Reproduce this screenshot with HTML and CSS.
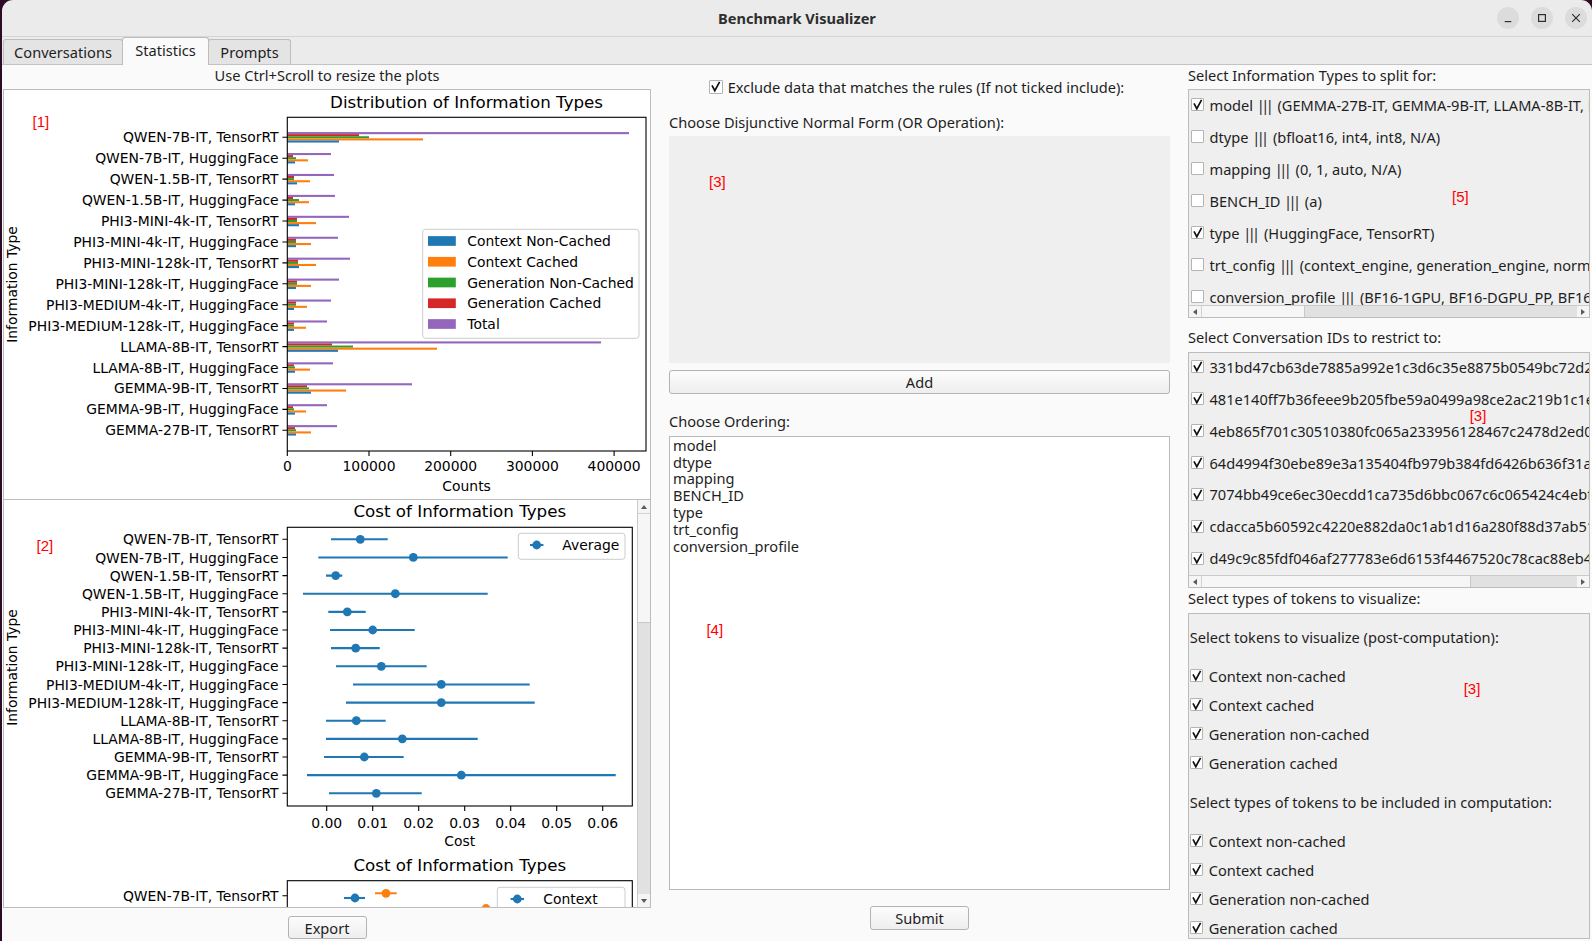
FILE: index.html
```html
<!DOCTYPE html>
<html>
<head>
<meta charset="utf-8">
<title>Benchmark Visualizer</title>
<link rel="stylesheet" href="styles.css">
</head>
<body>
<div class="window">
  <header class="titlebar">
    <div></div>
    <div class="title">Benchmark Visualizer</div>
    <div class="wbtns">
      <span class="wbtn"><svg viewBox="0 0 22 22"><path d="M7.7 14.6h6.6"/></svg></span>
      <span class="wbtn"><svg viewBox="0 0 22 22"><rect x="7.6" y="7.6" width="6.8" height="6.8"/></svg></span>
      <span class="wbtn"><svg viewBox="0 0 22 22"><path d="M7.2 7.2l7.6 7.6M14.8 7.2l-7.6 7.6"/></svg></span>
    </div>
  </header>
  <nav class="tabbar">
    <div class="tab t1">Conversations</div>
    <div class="tab t2 active">Statistics</div>
    <div class="tab t3">Prompts</div>
  </nav>
  <main class="pane">
    <section class="col-left">
      <div class="hint">Use Ctrl+Scroll to resize the plots</div>
      <div class="frame frame1">
        <svg class="mpl" width="646" height="409" viewBox="4 90 646 409">
          <rect x="4" y="90" width="646" height="409" fill="#fff"/>
          <text class="ttl m" x="466.6" y="107.5">Distribution of Information Types</text>
          <g transform="translate(287.3 137.3)"><rect class="b4" y="-5.23" width="341.7" height="2.09"/><rect class="b3" y="-3.14" width="71.7" height="2.09"/><rect class="b2" y="-1.05" width="81.7" height="2.09"/><rect class="b1" y="1.05" width="135.7" height="2.09"/><rect class="b0" y="3.14" width="51.7" height="2.09"/></g>
          <g transform="translate(287.3 158.23)"><rect class="b4" y="-5.23" width="43.7" height="2.09"/><rect class="b3" y="-3.14" width="5.7" height="2.09"/><rect class="b2" y="-1.05" width="8.7" height="2.09"/><rect class="b1" y="1.05" width="20.7" height="2.09"/><rect class="b0" y="3.14" width="7.7" height="2.09"/></g>
          <g transform="translate(287.3 179.16)"><rect class="b4" y="-5.23" width="46.7" height="2.09"/><rect class="b3" y="-3.14" width="6.7" height="2.09"/><rect class="b2" y="-1.05" width="6.7" height="2.09"/><rect class="b1" y="1.05" width="22.7" height="2.09"/><rect class="b0" y="3.14" width="9.7" height="2.09"/></g>
          <g transform="translate(287.3 200.09)"><rect class="b4" y="-5.23" width="47.7" height="2.09"/><rect class="b3" y="-3.14" width="5.7" height="2.09"/><rect class="b2" y="-1.05" width="11.7" height="2.09"/><rect class="b1" y="1.05" width="21.7" height="2.09"/><rect class="b0" y="3.14" width="7.7" height="2.09"/></g>
          <g transform="translate(287.3 221.02)"><rect class="b4" y="-5.23" width="61.7" height="2.09"/><rect class="b3" y="-3.14" width="9.7" height="2.09"/><rect class="b2" y="-1.05" width="9.7" height="2.09"/><rect class="b1" y="1.05" width="28.7" height="2.09"/><rect class="b0" y="3.14" width="11.7" height="2.09"/></g>
          <g transform="translate(287.3 241.95)"><rect class="b4" y="-5.23" width="50.7" height="2.09"/><rect class="b3" y="-3.14" width="8.7" height="2.09"/><rect class="b2" y="-1.05" width="8.7" height="2.09"/><rect class="b1" y="1.05" width="23.7" height="2.09"/><rect class="b0" y="3.14" width="8.7" height="2.09"/></g>
          <g transform="translate(287.3 262.88)"><rect class="b4" y="-5.23" width="62.7" height="2.09"/><rect class="b3" y="-3.14" width="10.7" height="2.09"/><rect class="b2" y="-1.05" width="10.7" height="2.09"/><rect class="b1" y="1.05" width="28.7" height="2.09"/><rect class="b0" y="3.14" width="11.7" height="2.09"/></g>
          <g transform="translate(287.3 283.81)"><rect class="b4" y="-5.23" width="51.7" height="2.09"/><rect class="b3" y="-3.14" width="9.7" height="2.09"/><rect class="b2" y="-1.05" width="9.7" height="2.09"/><rect class="b1" y="1.05" width="23.7" height="2.09"/><rect class="b0" y="3.14" width="8.7" height="2.09"/></g>
          <g transform="translate(287.3 304.74)"><rect class="b4" y="-5.23" width="43.7" height="2.09"/><rect class="b3" y="-3.14" width="8.7" height="2.09"/><rect class="b2" y="-1.05" width="8.7" height="2.09"/><rect class="b1" y="1.05" width="19.7" height="2.09"/><rect class="b0" y="3.14" width="6.7" height="2.09"/></g>
          <g transform="translate(287.3 325.67)"><rect class="b4" y="-5.23" width="39.7" height="2.09"/><rect class="b3" y="-3.14" width="6.7" height="2.09"/><rect class="b2" y="-1.05" width="6.7" height="2.09"/><rect class="b1" y="1.05" width="18.7" height="2.09"/><rect class="b0" y="3.14" width="6.7" height="2.09"/></g>
          <g transform="translate(287.3 346.6)"><rect class="b4" y="-5.23" width="313.7" height="2.09"/><rect class="b3" y="-3.14" width="44.7" height="2.09"/><rect class="b2" y="-1.05" width="65.7" height="2.09"/><rect class="b1" y="1.05" width="149.7" height="2.09"/><rect class="b0" y="3.14" width="50.7" height="2.09"/></g>
          <g transform="translate(287.3 367.53)"><rect class="b4" y="-5.23" width="45.7" height="2.09"/><rect class="b3" y="-3.14" width="6.7" height="2.09"/><rect class="b2" y="-1.05" width="7.7" height="2.09"/><rect class="b1" y="1.05" width="22.7" height="2.09"/><rect class="b0" y="3.14" width="7.7" height="2.09"/></g>
          <g transform="translate(287.3 388.46)"><rect class="b4" y="-5.23" width="124.7" height="2.09"/><rect class="b3" y="-3.14" width="19.7" height="2.09"/><rect class="b2" y="-1.05" width="21.7" height="2.09"/><rect class="b1" y="1.05" width="58.7" height="2.09"/><rect class="b0" y="3.14" width="23.7" height="2.09"/></g>
          <g transform="translate(287.3 409.39)"><rect class="b4" y="-5.23" width="39.7" height="2.09"/><rect class="b3" y="-3.14" width="5.7" height="2.09"/><rect class="b2" y="-1.05" width="6.7" height="2.09"/><rect class="b1" y="1.05" width="18.7" height="2.09"/><rect class="b0" y="3.14" width="7.7" height="2.09"/></g>
          <g transform="translate(287.3 430.32)"><rect class="b4" y="-5.23" width="49.7" height="2.09"/><rect class="b3" y="-3.14" width="7.7" height="2.09"/><rect class="b2" y="-1.05" width="8.7" height="2.09"/><rect class="b1" y="1.05" width="23.7" height="2.09"/><rect class="b0" y="3.14" width="8.7" height="2.09"/></g>
          <rect class="spine" x="287.3" y="117.3" width="358.7" height="333.7"/>
          <path class="tick" d="M282.4 137.3h4.9M282.4 158.23h4.9M282.4 179.16h4.9M282.4 200.09h4.9M282.4 221.02h4.9M282.4 241.95h4.9M282.4 262.88h4.9M282.4 283.81h4.9M282.4 304.74h4.9M282.4 325.67h4.9M282.4 346.6h4.9M282.4 367.53h4.9M282.4 388.46h4.9M282.4 409.39h4.9M282.4 430.32h4.9M287.3 451v4.9M369 451v4.9M450.7 451v4.9M532.4 451v4.9M614.1 451v4.9"/>
          <text class="r" x="278.6" y="142.3">QWEN-7B-IT, TensorRT</text>
          <text class="r" x="278.6" y="163.23">QWEN-7B-IT, HuggingFace</text>
          <text class="r" x="278.6" y="184.16">QWEN-1.5B-IT, TensorRT</text>
          <text class="r" x="278.6" y="205.09">QWEN-1.5B-IT, HuggingFace</text>
          <text class="r" x="278.6" y="226.02">PHI3-MINI-4k-IT, TensorRT</text>
          <text class="r" x="278.6" y="246.95">PHI3-MINI-4k-IT, HuggingFace</text>
          <text class="r" x="278.6" y="267.88">PHI3-MINI-128k-IT, TensorRT</text>
          <text class="r" x="278.6" y="288.81">PHI3-MINI-128k-IT, HuggingFace</text>
          <text class="r" x="278.6" y="309.74">PHI3-MEDIUM-4k-IT, HuggingFace</text>
          <text class="r" x="278.6" y="330.67">PHI3-MEDIUM-128k-IT, HuggingFace</text>
          <text class="r" x="278.6" y="351.6">LLAMA-8B-IT, TensorRT</text>
          <text class="r" x="278.6" y="372.53">LLAMA-8B-IT, HuggingFace</text>
          <text class="r" x="278.6" y="393.46">GEMMA-9B-IT, TensorRT</text>
          <text class="r" x="278.6" y="414.39">GEMMA-9B-IT, HuggingFace</text>
          <text class="r" x="278.6" y="435.32">GEMMA-27B-IT, TensorRT</text>
          <text class="m" x="287.3" y="471.3">0</text>
          <text class="m" x="369" y="471.3">100000</text>
          <text class="m" x="450.7" y="471.3">200000</text>
          <text class="m" x="532.4" y="471.3">300000</text>
          <text class="m" x="614.1" y="471.3">400000</text>
          <text class="m" x="466.6" y="491">Counts</text>
          <text class="m" transform="translate(17.4 284.5) rotate(-90)">Information Type</text>
          <rect class="legend" x="422.7" y="229.3" width="216.3" height="109" rx="2.8"/>
          <rect class="b0" x="428" y="236.15" width="27.8" height="9.7"/>
          <rect class="b1" x="428" y="256.9" width="27.8" height="9.7"/>
          <rect class="b2" x="428" y="277.65" width="27.8" height="9.7"/>
          <rect class="b3" x="428" y="298.4" width="27.8" height="9.7"/>
          <rect class="b4" x="428" y="319.15" width="27.8" height="9.7"/>
          <text x="467.3" y="246">Context Non-Cached</text>
          <text x="467.3" y="266.75">Context Cached</text>
          <text x="467.3" y="287.5">Generation Non-Cached</text>
          <text x="467.3" y="308.25">Generation Cached</text>
          <text x="467.3" y="329">Total</text>
        </svg>
        <span class="marker mk1">[1]</span>
      </div>
      <div class="frame frame2">
        <svg class="mpl" width="633" height="407" viewBox="4 500 633 407">
          <rect x="4" y="500" width="633" height="407" fill="#fff"/>
          <text class="ttl m" x="459.8" y="517.3">Cost of Information Types</text>
          <rect class="spine" x="287.3" y="527.3" width="345" height="278.7"/>
          <path class="eb" d="M331 539.3H387.7M318.3 557.44H507.7M326 575.59H342.3M303 593.73H487.7M328.3 611.87H365.7M330 630.01H414.7M331 648.16H379.7M336 666.3H426.7M353 684.44H529.7M346 702.59H534.7M326 720.73H385.7M326 738.87H477.7M324 757.01H403.7M307 775.16H615.7M329 793.3H421.7"/>
          <g class="dots">
            <circle cx="360.3" cy="539.3" r="4.4"/>
            <circle cx="413.3" cy="557.44" r="4.4"/>
            <circle cx="335.7" cy="575.59" r="4.4"/>
            <circle cx="395.3" cy="593.73" r="4.4"/>
            <circle cx="347.3" cy="611.87" r="4.4"/>
            <circle cx="372.7" cy="630.01" r="4.4"/>
            <circle cx="355.7" cy="648.16" r="4.4"/>
            <circle cx="381.3" cy="666.3" r="4.4"/>
            <circle cx="441.3" cy="684.44" r="4.4"/>
            <circle cx="441.3" cy="702.59" r="4.4"/>
            <circle cx="356.3" cy="720.73" r="4.4"/>
            <circle cx="402.3" cy="738.87" r="4.4"/>
            <circle cx="364.3" cy="757.01" r="4.4"/>
            <circle cx="461.3" cy="775.16" r="4.4"/>
            <circle cx="376.3" cy="793.3" r="4.4"/>
          </g>
          <path class="tick" d="M282.4 539.3h4.9M282.4 557.44h4.9M282.4 575.59h4.9M282.4 593.73h4.9M282.4 611.87h4.9M282.4 630.01h4.9M282.4 648.16h4.9M282.4 666.3h4.9M282.4 684.44h4.9M282.4 702.59h4.9M282.4 720.73h4.9M282.4 738.87h4.9M282.4 757.01h4.9M282.4 775.16h4.9M282.4 793.3h4.9M326.7 806v4.9M372.7 806v4.9M418.7 806v4.9M464.7 806v4.9M510.7 806v4.9M556.7 806v4.9M602.7 806v4.9M282.4 895.7h4.9"/>
          <text class="r" x="278.6" y="544.4">QWEN-7B-IT, TensorRT</text>
          <text class="r" x="278.6" y="562.54">QWEN-7B-IT, HuggingFace</text>
          <text class="r" x="278.6" y="580.69">QWEN-1.5B-IT, TensorRT</text>
          <text class="r" x="278.6" y="598.83">QWEN-1.5B-IT, HuggingFace</text>
          <text class="r" x="278.6" y="616.97">PHI3-MINI-4k-IT, TensorRT</text>
          <text class="r" x="278.6" y="635.11">PHI3-MINI-4k-IT, HuggingFace</text>
          <text class="r" x="278.6" y="653.26">PHI3-MINI-128k-IT, TensorRT</text>
          <text class="r" x="278.6" y="671.4">PHI3-MINI-128k-IT, HuggingFace</text>
          <text class="r" x="278.6" y="689.54">PHI3-MEDIUM-4k-IT, HuggingFace</text>
          <text class="r" x="278.6" y="707.69">PHI3-MEDIUM-128k-IT, HuggingFace</text>
          <text class="r" x="278.6" y="725.83">LLAMA-8B-IT, TensorRT</text>
          <text class="r" x="278.6" y="743.97">LLAMA-8B-IT, HuggingFace</text>
          <text class="r" x="278.6" y="762.11">GEMMA-9B-IT, TensorRT</text>
          <text class="r" x="278.6" y="780.26">GEMMA-9B-IT, HuggingFace</text>
          <text class="r" x="278.6" y="798.4">GEMMA-27B-IT, TensorRT</text>
          <text class="m" x="326.7" y="827.7">0.00</text>
          <text class="m" x="372.7" y="827.7">0.01</text>
          <text class="m" x="418.7" y="827.7">0.02</text>
          <text class="m" x="464.7" y="827.7">0.03</text>
          <text class="m" x="510.7" y="827.7">0.04</text>
          <text class="m" x="556.7" y="827.7">0.05</text>
          <text class="m" x="602.7" y="827.7">0.06</text>
          <text class="m" x="459.8" y="846">Cost</text>
          <text class="m" transform="translate(17.4 667.5) rotate(-90)">Information Type</text>
          <rect class="legend" x="518.3" y="533.3" width="106.7" height="26" rx="2.8"/>
          <path class="eb" d="M530 545H543.4"/>
          <circle class="dot" cx="536.7" cy="545" r="4.4"/>
          <text x="562.3" y="549.8">Average</text>

          <text class="ttl m" x="459.8" y="870.5">Cost of Information Types</text>
          <rect class="spine" x="287.3" y="880.7" width="345" height="120"/>
          <path class="eb" d="M344 898H365"/>
          <circle class="dot" cx="355" cy="898" r="4.4"/>
          <path class="eb or" d="M375 893.3H396.7M462 908.5H510"/>
          <circle class="dot or" cx="386" cy="893.3" r="4.4"/>
          <circle class="dot or" cx="486" cy="908.5" r="4.4"/>
          <text class="r" x="278.6" y="900.8">QWEN-7B-IT, TensorRT</text>
          <rect class="legend" x="497.3" y="887.3" width="127.7" height="60" rx="2.8"/>
          <path class="eb" d="M510.6 899H524"/>
          <circle class="dot" cx="517.3" cy="899" r="4.4"/>
          <text x="543.3" y="903.6">Context</text>
        </svg>
        <div class="vscroll">
          <div class="sbtn"><span class="tri up"></span></div>
          <div class="vthumb"></div>
          <div class="vgroove"></div>
          <div class="sbtn"><span class="tri down"></span></div>
        </div>
        <span class="marker mk2">[2]</span>
      </div>
      <div class="export-row"><div class="btn export">Export</div></div>
    </section>

    <section class="col-mid">
      <div class="excl">
        <span class="cb cb14"><svg class="ck" viewBox="0 0 13 13"><path d="M3 5.4 5.8 10.6 10.6 1.9"/></svg></span>
        <span>Exclude data that matches the rules (If not ticked include):</span>
      </div>
      <div class="lbl lbl-dnf">Choose Disjunctive Normal Form (OR Operation):</div>
      <div class="dnf"><span class="marker mk3">[3]</span></div>
      <div class="btn add">Add</div>
      <div class="lbl lbl-ord">Choose Ordering:</div>
      <div class="list">
        <div class="li">model</div>
        <div class="li">dtype</div>
        <div class="li">mapping</div>
        <div class="li">BENCH_ID</div>
        <div class="li">type</div>
        <div class="li">trt_config</div>
        <div class="li">conversion_profile</div>
        <span class="marker mk4">[4]</span>
      </div>
      <div class="btn submit">Submit</div>
    </section>

    <section class="col-right">
      <div class="lbl">Select Information Types to split for:</div>
      <div class="box box1">
        <div class="cblist">
          <div class="row"><span class="cb"><svg class="ck" viewBox="0 0 13 13"><path d="M3 5.4 5.8 10.6 10.6 1.9"/></svg></span><span>model <span class="pp">|||</span> (GEMMA-27B-IT, GEMMA-9B-IT, LLAMA-8B-IT, PHI3-MEDIUM-128k-IT, PHI3-MEDIUM-4k-IT)</span></div>
          <div class="row"><span class="cb"></span><span>dtype <span class="pp">|||</span> (bfloat16, int4, int8, N/A)</span></div>
          <div class="row"><span class="cb"></span><span>mapping <span class="pp">|||</span> (0, 1, auto, N/A)</span></div>
          <div class="row"><span class="cb"></span><span>BENCH_ID <span class="pp">|||</span> (a)</span></div>
          <div class="row"><span class="cb"><svg class="ck" viewBox="0 0 13 13"><path d="M3 5.4 5.8 10.6 10.6 1.9"/></svg></span><span>type <span class="pp">|||</span> (HuggingFace, TensorRT)</span></div>
          <div class="row"><span class="cb"></span><span>trt_config <span class="pp">|||</span> (context_engine, generation_engine, normal)</span></div>
          <div class="row"><span class="cb"></span><span>conversion_profile <span class="pp">|||</span> (BF16-1GPU, BF16-DGPU_PP, BF16-DGPU_TP, INT4-1GPU)</span></div>
        </div>
        <div class="hscroll">
          <div class="sbtn"><span class="tri left"></span></div>
          <div class="hthumb th1"></div>
          <div class="hgroove"></div>
          <div class="sbtn"><span class="tri right"></span></div>
        </div>
        <span class="marker mk5">[5]</span>
      </div>
      <div class="lbl lbl2">Select Conversation IDs to restrict to:</div>
      <div class="box box2">
        <div class="cblist">
          <div class="row"><span class="cb"><svg class="ck" viewBox="0 0 13 13"><path d="M3 5.4 5.8 10.6 10.6 1.9"/></svg></span><span>331bd47cb63de7885a992e1c3d6c35e8875b0549bc72d2a1f</span></div>
          <div class="row"><span class="cb"><svg class="ck" viewBox="0 0 13 13"><path d="M3 5.4 5.8 10.6 10.6 1.9"/></svg></span><span>481e140ff7b36feee9b205fbe59a0499a98ce2ac219b1c1e4</span></div>
          <div class="row"><span class="cb"><svg class="ck" viewBox="0 0 13 13"><path d="M3 5.4 5.8 10.6 10.6 1.9"/></svg></span><span>4eb865f701c30510380fc065a233956128467c2478d2ed0c3</span></div>
          <div class="row"><span class="cb"><svg class="ck" viewBox="0 0 13 13"><path d="M3 5.4 5.8 10.6 10.6 1.9"/></svg></span><span>64d4994f30ebe89e3a135404fb979b384fd6426b636f31a82</span></div>
          <div class="row"><span class="cb"><svg class="ck" viewBox="0 0 13 13"><path d="M3 5.4 5.8 10.6 10.6 1.9"/></svg></span><span>7074bb49ce6ec30ecdd1ca735d6bbc067c6c065424c4ebf71</span></div>
          <div class="row"><span class="cb"><svg class="ck" viewBox="0 0 13 13"><path d="M3 5.4 5.8 10.6 10.6 1.9"/></svg></span><span>cdacca5b60592c4220e882da0c1ab1d16a280f88d37ab51c9</span></div>
          <div class="row"><span class="cb"><svg class="ck" viewBox="0 0 13 13"><path d="M3 5.4 5.8 10.6 10.6 1.9"/></svg></span><span>d49c9c85fdf046af277783e6d6153f4467520c78cac88eb4d</span></div>
        </div>
        <div class="hscroll">
          <div class="sbtn"><span class="tri left"></span></div>
          <div class="hthumb th2"></div>
          <div class="hgroove"></div>
          <div class="sbtn"><span class="tri right"></span></div>
        </div>
        <span class="marker mk6">[3]</span>
      </div>
      <div class="lbl">Select types of tokens to visualize:</div>
      <div class="box box3">
        <div class="sub">Select tokens to visualize (post-computation):</div>
        <div class="tlist">
          <div class="row"><span class="cb"><svg class="ck" viewBox="0 0 13 13"><path d="M3 5.4 5.8 10.6 10.6 1.9"/></svg></span><span>Context non-cached</span></div>
          <div class="row"><span class="cb"><svg class="ck" viewBox="0 0 13 13"><path d="M3 5.4 5.8 10.6 10.6 1.9"/></svg></span><span>Context cached</span></div>
          <div class="row"><span class="cb"><svg class="ck" viewBox="0 0 13 13"><path d="M3 5.4 5.8 10.6 10.6 1.9"/></svg></span><span>Generation non-cached</span></div>
          <div class="row"><span class="cb"><svg class="ck" viewBox="0 0 13 13"><path d="M3 5.4 5.8 10.6 10.6 1.9"/></svg></span><span>Generation cached</span></div>
        </div>
        <div class="sub sub2">Select types of tokens to be included in computation:</div>
        <div class="tlist">
          <div class="row"><span class="cb"><svg class="ck" viewBox="0 0 13 13"><path d="M3 5.4 5.8 10.6 10.6 1.9"/></svg></span><span>Context non-cached</span></div>
          <div class="row"><span class="cb"><svg class="ck" viewBox="0 0 13 13"><path d="M3 5.4 5.8 10.6 10.6 1.9"/></svg></span><span>Context cached</span></div>
          <div class="row"><span class="cb"><svg class="ck" viewBox="0 0 13 13"><path d="M3 5.4 5.8 10.6 10.6 1.9"/></svg></span><span>Generation non-cached</span></div>
          <div class="row"><span class="cb"><svg class="ck" viewBox="0 0 13 13"><path d="M3 5.4 5.8 10.6 10.6 1.9"/></svg></span><span>Generation cached</span></div>
        </div>
        <span class="marker mk7">[3]</span>
      </div>
    </section>
  </main>
</div>
</body>
</html>
```

FILE: styles.css
```css
* { box-sizing: border-box; }
html, body { margin: 0; padding: 0; }
body {
  width: 1592px;
  height: 941px;
  overflow: hidden;
  background: #2b0c24;
  font-family: "Noto Sans", "Open Sans", "DejaVu Sans", sans-serif;
  font-size: 14.6px;
  color: #1e1e1e;
}
.window {
  margin-left: 2px;
  width: 1590px;
  height: 941px;
  background: #ebebeb;
  border-radius: 11px 11px 0 0;
  overflow: hidden;
  display: flex;
  flex-direction: column;
}

/* title bar */
.titlebar {
  flex: none;
  height: 37px;
  border-bottom: 1px solid #d5d5d5;
  display: grid;
  grid-template-columns: 1fr auto 1fr;
  align-items: center;
}
.title { font-weight: 700; color: #2e2e2e; font-size: 14.6px; }
.wbtns { display: flex; justify-content: flex-end; gap: 12px; padding-right: 5px; }
.wbtn {
  width: 22px; height: 22px; border-radius: 50%;
  background: #dcdcdc; display: block;
}
.wbtn svg { width: 22px; height: 22px; display: block; }
.wbtn path, .wbtn rect { fill: none; stroke: #2f2f2f; stroke-width: 1.2; }

/* tabs */
.tabbar {
  flex: none;
  height: 27px;
  display: flex;
  align-items: flex-end;
  padding-left: 1px;
}
.tab {
  height: 25px;
  border: 1px solid #bdbdbd;
  border-bottom: none;
  border-radius: 3px 3px 0 0;
  background: #e4e4e4;
  display: flex;
  align-items: center;
  justify-content: center;
  padding-bottom: 1px;
}
.t1 { width: 120px; }
.t2 { width: 87px; margin-left: -1px; }
.t3 { width: 83px; margin-left: -1px; }
.tab.active {
  height: 28px;
  background: #fafafa;
  margin-bottom: -1px;
  position: relative;
  z-index: 1;
  padding-bottom: 3px;
}

/* pane */
.pane {
  flex: 1;
  background: #fafafa;
  border-top: 1px solid #c3c3c3;
  display: flex;
  min-height: 0;
}
.col-left {
  flex: none;
  width: 649px;
  padding-left: 1px;
  display: flex;
  flex-direction: column;
}
.hint { height: 24px; line-height: 20px; text-align: center; }
.frame {
  width: 648px;
  border: 1px solid #bdbdbd;
  background: #fff;
  position: relative;
  overflow: hidden;
}
.frame1 { height: 411px; }
.frame2 { height: 408px; border-top: none; display: flex; }
.frame svg { display: block; flex: none; }
.export-row { flex: 1; display: flex; justify-content: center; padding-top: 8px; }

/* matplotlib look */
.mpl text { font-family: "DejaVu Sans", sans-serif; font-size: 13.9px; fill: #000; }
.mpl text.ttl { font-size: 16.7px; }
.mpl .r { text-anchor: end; }
.mpl .m { text-anchor: middle; }
.mpl .b0 { fill: #1f77b4; }
.mpl .b1 { fill: #ff7f0e; }
.mpl .b2 { fill: #2ca02c; }
.mpl .b3 { fill: #d62728; }
.mpl .b4 { fill: #9467bd; }
.mpl .spine { fill: none; stroke: #000; stroke-width: 1.1; }
.mpl .tick { fill: none; stroke: #000; stroke-width: 1.1; }
.mpl .legend { fill: #fff; fill-opacity: 0.8; stroke: #cccccc; stroke-width: 1; }
.mpl .eb { fill: none; stroke: #1f77b4; stroke-width: 2.1; }
.mpl .eb.or { stroke: #ff7f0e; }
.mpl .dots circle, .mpl .dot { fill: #1f77b4; }
.mpl .dot.or { fill: #ff7f0e; }

/* scrollbars */
.vscroll {
  flex: none;
  width: 13px;
  display: flex;
  flex-direction: column;
  background: #e1e1e1;
  border-left: 1px solid #cbcbcb;
}
.sbtn {
  flex: none;
  width: 12px;
  height: 12px;
  background: #f5f5f5;
  display: flex;
  align-items: center;
  justify-content: center;
}
.vscroll .sbtn { width: 12px; height: 13px; }
.vthumb { flex: none; height: 110px; background: #f6f6f6; border-top: 1px solid #d2d2d2; border-bottom: 1px solid #c8c8c8; }
.vgroove { flex: 1; }
.tri { width: 0; height: 0; display: block; }
.tri.up { border-left: 3px solid transparent; border-right: 3px solid transparent; border-bottom: 4px solid #5a5a5a; }
.tri.down { border-left: 3px solid transparent; border-right: 3px solid transparent; border-top: 4px solid #5a5a5a; }
.tri.left { border-top: 3px solid transparent; border-bottom: 3px solid transparent; border-right: 4px solid #5a5a5a; }
.tri.right { border-top: 3px solid transparent; border-bottom: 3px solid transparent; border-left: 4px solid #5a5a5a; }
.hscroll {
  flex: none;
  height: 12px;
  display: flex;
  background: #e1e1e1;
  border-top: 1px solid #cbcbcb;
}
.hthumb { flex: none; background: #f6f6f6; border-left: 1px solid #d2d2d2; border-right: 1px solid #c8c8c8; }
.th1 { width: 104px; }
.th2 { width: 270px; }
.hgroove { flex: 1; }

/* buttons */
.btn {
  border: 1px solid #b3b3b3;
  border-radius: 3px;
  background: linear-gradient(#fcfcfc, #eeeeee);
  display: flex;
  align-items: center;
  justify-content: center;
  color: #1e1e1e;
}
.export { width: 79px; height: 23px; }
.add { margin-top: 6.5px; height: 24px; }
.submit { margin-top: 16px; height: 24.5px; width: 99px; align-self: center; }

/* middle */
.col-mid {
  flex: none;
  width: 519px;
  padding-left: 18px;
  display: flex;
  flex-direction: column;
}
.excl {
  margin-top: 12px;
  height: 20px;
  display: flex;
  align-items: center;
  justify-content: center;
  gap: 5px;
  padding-right: 6px;
}
.lbl { line-height: 20px; height: 20px; white-space: nowrap; }
.lbl-dnf { margin-top: 15px; }
.dnf { margin-top: 4px; height: 227px; background: #efefef; position: relative; }
.lbl-ord { margin-top: 17.5px; }
.list {
  margin-top: 4.7px;
  height: 454.3px;
  background: #fff;
  border: 1px solid #b9b9b9;
  padding: 0 3px;
  position: relative;
}
.li { height: 16.9px; line-height: 16.9px; }

/* checkboxes */
.cb {
  flex: none;
  width: 13px;
  height: 13px;
  background: #fff;
  border: 1px solid #b4b4b4;
  border-radius: 1px;
  display: block;
  position: relative;
}
.cb14 { width: 14px; height: 14px; }
.ck { position: absolute; left: -1px; top: -1px; width: 13px; height: 13px; overflow: visible; }
.ck path { fill: none; stroke: #111; stroke-width: 1.7; stroke-linejoin: miter; }
.pp { letter-spacing: -3.6px; padding-right: 3.6px; }

/* right */
.col-right {
  flex: 1;
  min-width: 0;
  padding-left: 18px;
  padding-right: 2px;
  display: flex;
  flex-direction: column;
}
.box {
  border: 1px solid #bcbcbc;
  background: #efefef;
  position: relative;
  overflow: hidden;
  display: flex;
  flex-direction: column;
}
.box1 { margin-top: 4.3px; height: 229px; }
.lbl2 { margin-top: 8.4px; }
.box2 { margin-top: 5px; height: 236.6px; }
.box3 { margin-top: 5px; height: 326px; padding: 12.4px 0 0 0.7px; }
.cblist {
  flex: 1;
  min-height: 0;
  overflow: hidden;
  padding: 4.7px 0 0 1.5px;
  display: flex;
  flex-direction: column;
  gap: 11.95px;
}
.box2 .cblist { padding-top: 4px; }
.row {
  flex: none;
  height: 20px;
  display: flex;
  align-items: center;
  gap: 6px;
  white-space: nowrap;
}
.sub { line-height: 20px; height: 20px; white-space: nowrap; }
.sub2 { margin-top: 18.7px; }
.tlist { margin-top: 19.3px; display: flex; flex-direction: column; gap: 9px; }

/* red markers */
.marker {
  position: absolute;
  font-family: "Liberation Sans", Arial, sans-serif;
  font-size: 15px;
  line-height: 17px;
  color: #ff0000;
}
.mk1 { left: 28.5px; top: 22.5px; }
.mk2 { left: 32.5px; top: 37px; }
.mk3 { left: 40px; top: 37.2px; }
.mk4 { left: 36.4px; top: 184px; }
.mk5 { left: 263px; top: 98px; }
.mk6 { left: 280.7px; top: 54px; }
.mk7 { left: 274.7px; top: 65.9px; }
```
